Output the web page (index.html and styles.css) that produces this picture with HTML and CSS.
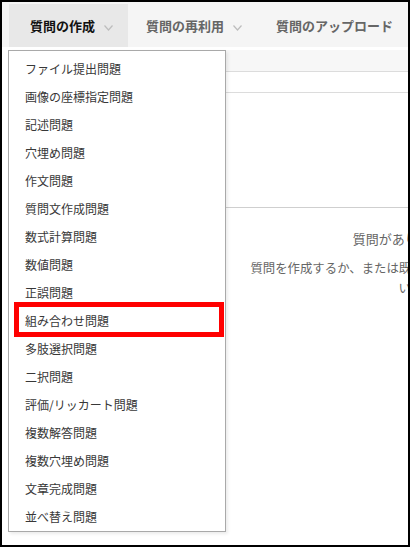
FILE: index.html
```html
<!DOCTYPE html>
<html lang="ja">

<head>
    <meta charset="UTF-8" />
    <meta name="viewport" content="width=device-width, initial-scale=1.0" />
    <title>質問の作成</title>
    <link rel="stylesheet" href="styles.css">
</head>

<body>
    <div class="frame">
        <nav class="tabs">
            <div class="tab active">質問の作成
                <svg class="chevron" width="9" height="6" viewBox="0 0 9 6"><polyline points="0.5,0.5 4.5,5 8.5,0.5" /></svg>
            </div>
            <div class="tab">質問の再利用
                <svg class="chevron" width="9" height="6" viewBox="0 0 9 6"><polyline points="0.5,0.5 4.5,5 8.5,0.5" /></svg>
            </div>
            <div class="tab">質問のアップロード</div>
        </nav>

        <div class="content">
            <div class="panel">
                <div class="panel-head"></div>
                <div class="panel-row"></div>
                <div class="panel-blank"></div>
                <div class="empty">
                    <p class="empty-title">質問がありません。</p>
                    <p class="empty-text">質問を作成するか、または既存の質問を再利用してください。</p>
                </div>
            </div>
        </div>

        <ul class="dropdown">
            <li>ファイル提出問題</li>
            <li>画像の座標指定問題</li>
            <li>記述問題</li>
            <li>穴埋め問題</li>
            <li>作文問題</li>
            <li>質問文作成問題</li>
            <li>数式計算問題</li>
            <li>数値問題</li>
            <li>正誤問題</li>
            <li class="highlight">組み合わせ問題</li>
            <li>多肢選択問題</li>
            <li>二択問題</li>
            <li>評価/リッカート問題</li>
            <li>複数解答問題</li>
            <li>複数穴埋め問題</li>
            <li>文章完成問題</li>
            <li>並べ替え問題</li>
        </ul>
    </div>
</body>

</html>
```

FILE: styles.css
```css
* {
    box-sizing: border-box;
}

body {
    margin: 0;
    font-family: "Noto Sans CJK JP", "Noto Sans", sans-serif;
    color: #333;
    background: #fff;
}

.frame {
    position: relative;
    width: 410px;
    height: 547px;
    border: 2px solid #000;
    overflow: hidden;
    background: #fff;
}

/* tabs */
.tabs {
    display: flex;
    height: 45px;
    padding: 2px 0 0 7px;
    background: #f5f5f5;
}

.tab {
    display: flex;
    align-items: center;
    height: 43px;
    padding: 0 16px 0 18px;
    font-size: 13px;
    font-weight: bold;
    color: #666;
    white-space: nowrap;
}

.tab.active {
    padding: 0 15px 0 21px;
    background: #e8e8e8;
    color: #111;
}

.chevron {
    margin: 4px 0 0 9px;
}

.chevron polyline {
    fill: none;
    stroke: #bdbdbd;
    stroke-width: 1.2;
}

/* page behind the menu */
.content {
    padding: 3px 0 0 21px;
}

.panel {
    width: 800px;
    border-left: 1px solid #cfcfcf;
}

.panel-head {
    height: 22px;
    background: #f7f7f7;
    border-bottom: 1px solid #dcdcdc;
}

.panel-row {
    height: 21px;
    border-bottom: 1px solid #dcdcdc;
}

.panel-blank {
    height: 115px;
    border-bottom: 1px solid #cfcfcf;
}

.empty {
    width: 330px;
    margin-left: 222px;
    padding-top: 21px;
    text-align: center;
    color: #666;
}

.empty p {
    margin: 0;
    line-height: 20px;
}

.empty-title {
    font-size: 13px;
}

.empty-text {
    margin-top: 9px !important;
    font-size: 12.4px;
}

/* dropdown menu */
.dropdown {
    position: absolute;
    top: 48px;
    left: 6px;
    width: 218px;
    margin: 0;
    padding: 4px 0 0;
    list-style: none;
    background: #fff;
    border: 1px solid #a9a9a9;
    box-shadow: 2px 2px 3px rgba(0, 0, 0, 0.08);
}

.dropdown li {
    position: relative;
    height: 28px;
    line-height: 28px;
    padding-left: 16px;
    font-size: 12px;
    color: #383838;
    white-space: nowrap;
}

.highlight::after {
    content: "";
    position: absolute;
    top: -5px;
    bottom: -2px;
    left: 5px;
    right: 1px;
    border: 5px solid #ff0000;
}
```
